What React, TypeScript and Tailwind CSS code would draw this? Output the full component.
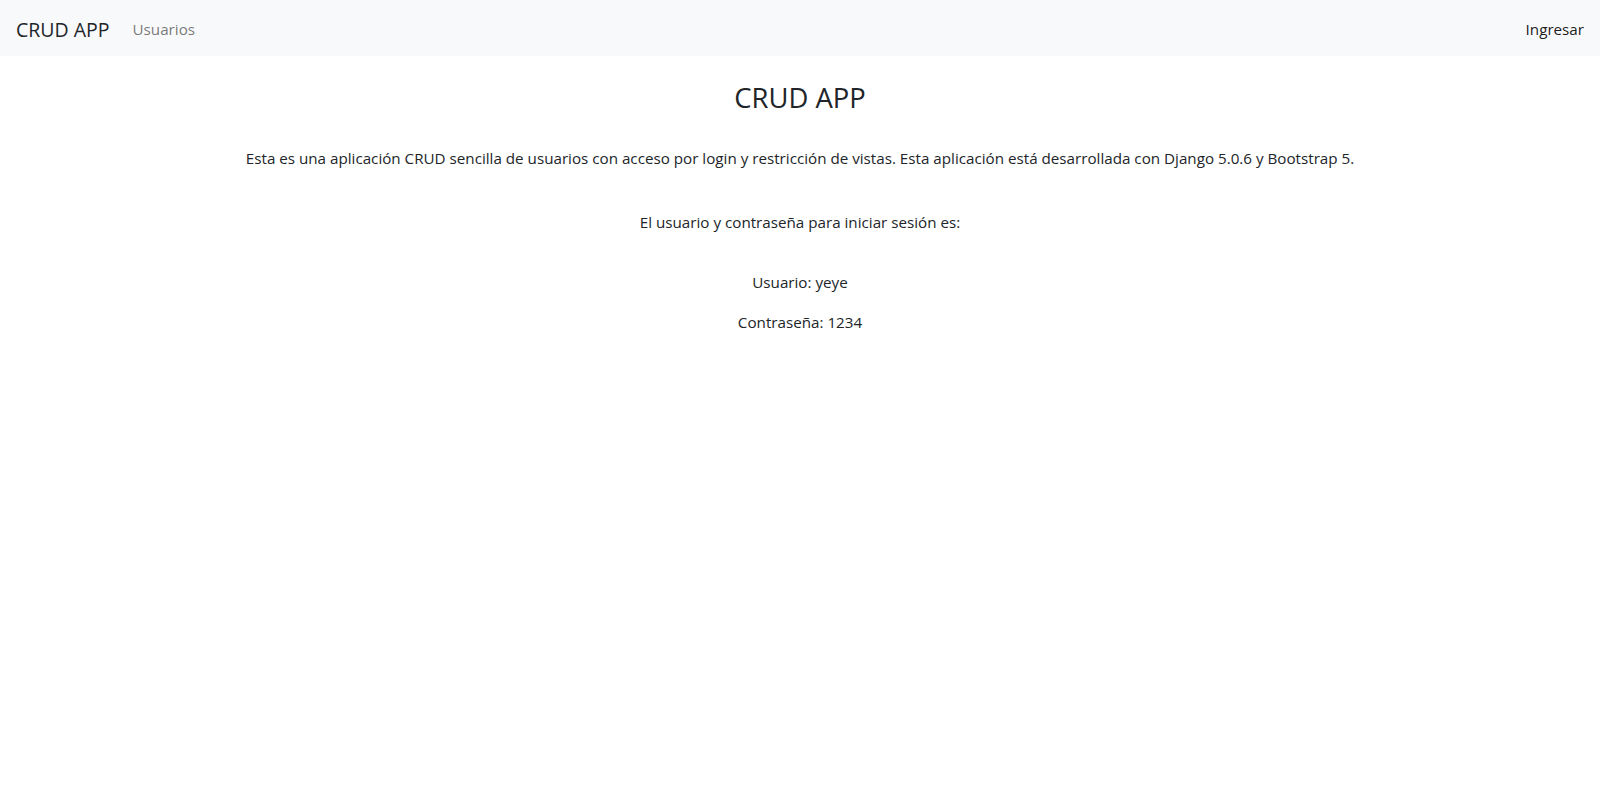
export default function App() {
  return (
    <div className="min-h-screen w-full bg-white text-[#212529] font-['Open_Sans',sans-serif]">
      {/* Navbar */}
      <nav className="h-[56px] bg-[#f8f9fa] flex items-center justify-between px-4 pt-[3px]">
        <div className="flex items-center">
          <span className="text-[19.5px] mr-[23px] text-[#212529]">CRUD APP</span>
          <span className="text-[15.2px] text-black/55">Usuarios</span>
        </div>
        <span className="text-[15.2px] text-black/90">Ingresar</span>
      </nav>
      {/* Contenido */}
      <main className="flex flex-col items-center text-center">
        <h3 className="text-[27.4px] leading-[1.2] mt-[26px] mb-[31px]">CRUD APP</h3>
        <p className="text-[15.2px] leading-[24px] mb-[40px]">
          Esta es una aplicación CRUD sencilla de usuarios con acceso por login y restricción de vistas. Esta aplicación está desarrollada con Django 5.0.6 y Bootstrap 5.
        </p>
        <p className="text-[15.2px] leading-[24px] mb-[36px]">El usuario y contraseña para iniciar sesión es:</p>
        <p className="text-[15.2px] leading-[24px] mb-[16px]">Usuario: yeye</p>
        <p className="text-[15.2px] leading-[24px]">Contraseña: 1234</p>
      </main>
    </div>
  )
}
